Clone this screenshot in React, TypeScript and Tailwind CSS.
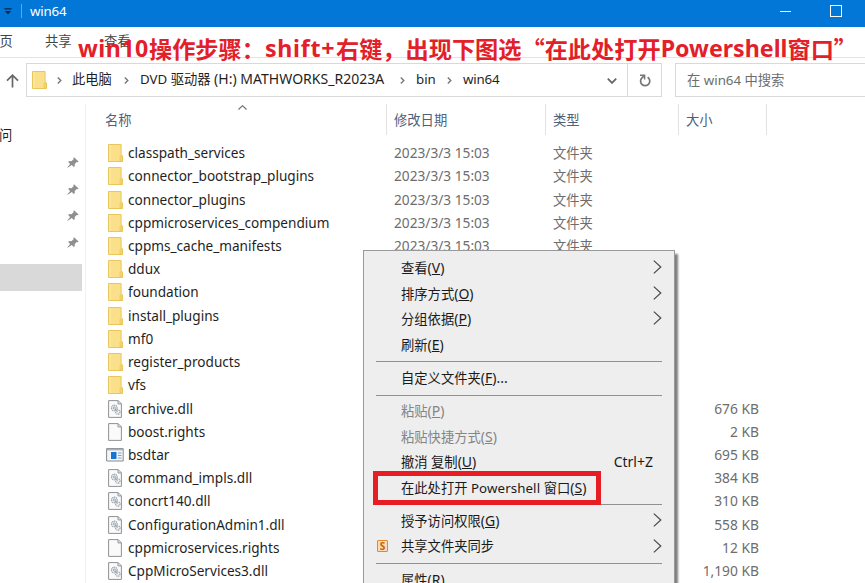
import type { ReactNode } from "react";

type FileKind = "folder" | "dll" | "doc" | "app";

type FileRow = { name: string; kind: FileKind; size?: string };

const files: FileRow[] = [
  { name: "classpath_services", kind: "folder" },
  { name: "connector_bootstrap_plugins", kind: "folder" },
  { name: "connector_plugins", kind: "folder" },
  { name: "cppmicroservices_compendium", kind: "folder" },
  { name: "cppms_cache_manifests", kind: "folder" },
  { name: "ddux", kind: "folder" },
  { name: "foundation", kind: "folder" },
  { name: "install_plugins", kind: "folder" },
  { name: "mf0", kind: "folder" },
  { name: "register_products", kind: "folder" },
  { name: "vfs", kind: "folder" },
  { name: "archive.dll", kind: "dll", size: "676 KB" },
  { name: "boost.rights", kind: "doc", size: "2 KB" },
  { name: "bsdtar", kind: "app", size: "695 KB" },
  { name: "command_impls.dll", kind: "dll", size: "384 KB" },
  { name: "concrt140.dll", kind: "dll", size: "310 KB" },
  { name: "ConfigurationAdmin1.dll", kind: "dll", size: "558 KB" },
  { name: "cppmicroservices.rights", kind: "doc", size: "12 KB" },
  { name: "CppMicroServices3.dll", kind: "dll", size: "1,190 KB" },
];

function FolderIcon() {
  return (
    <svg className="h-[18px] w-[15px]" viewBox="0 0 15 18" fill="none">
      <path d="M.5.5h12.6v10.2l1.4 1.2v5.6H.5z" fill="#fbe08b" stroke="#e9c75c" />
      <path d="M12 17.3v-4.8l1.3-1.4 1 1.2v5z" fill="#f4d470" stroke="#e6c458" strokeWidth=".6" />
      <path d="M2 1v16" stroke="#fdebaa" />
    </svg>
  );
}

function PageIcon({ gears }: { gears?: boolean }) {
  return (
    <svg className="h-[18px] w-[15px]" viewBox="0 0 15 18" fill="none">
      <path d="M.6.6h9.6l3.2 3.2v13.6H.6z" fill="#fafafa" stroke="#8f9296" />
      <path d="M10 .8v3.1h3.2" stroke="#8f9296" />
      {gears && (
        <g stroke="#98a3ac">
          <circle cx="6.3" cy="8" r="2.8" strokeWidth="1.2" strokeDasharray="1.3 .5" />
          <circle cx="6.3" cy="8" r="1.1" />
          <circle cx="9.8" cy="12" r="2.2" strokeWidth="1.2" strokeDasharray="1.2 .5" />
          <path d="M7 9l3 3.4" />
        </g>
      )}
    </svg>
  );
}

function AppIcon() {
  return (
    <svg className="h-[14px] w-[18px]" viewBox="0 0 18 14" fill="none">
      <path d="M.6.6h16.6v12.4H.6z" fill="#f3f5f7" stroke="#858a90" />
      <path d="M1 1.6h16" stroke="#a9b0b7" strokeWidth="1.5" />
      <path d="M5 4h5.5v7H5z" fill="#1874d2" />
      <path d="M12 5h3.5M12 7.5h3.5M12 10h3.5" stroke="#7d9fc4" />
    </svg>
  );
}

function FileIcon({ kind }: { kind: FileKind }) {
  if (kind === "folder") return <FolderIcon />;
  if (kind === "app") return <AppIcon />;
  return <PageIcon gears={kind === "dll"} />;
}

function PinIcon() {
  return (
    <svg className="h-[11px] w-[12px]" viewBox="0 0 12 11">
      <path d="M7 .3l4.6 4.2-1 .7-.9-.3-2 2 .1 2.1-1 .9-2-1.9L.7 10.7l-.4-.3 2.8-3.5L1.2 5l1-.9 2.2.1 2.2-2-.3-.9z" fill="#8f8f8f" />
    </svg>
  );
}

function Crumb() {
  return (
    <svg className="h-[7px] w-[5px] shrink-0" viewBox="0 0 5 7" fill="none">
      <path d="M.8.6l3 2.9-3 2.9" stroke="#777" strokeWidth="1.4" />
    </svg>
  );
}

function MenuItem({ children, hotkey, suffix, arrow, disabled, shortcut, icon }: {
  children: ReactNode;
  hotkey?: string;
  suffix?: string;
  arrow?: boolean;
  disabled?: boolean;
  shortcut?: string;
  icon?: ReactNode;
}) {
  return (
    <div className={`flex h-[25.5px] items-center pr-[12px] whitespace-pre ${disabled ? "text-[#858585]" : "text-[#1a1a1a]"}`}>
      <div className="flex w-[37px] shrink-0 pl-[13px]">{icon}</div>
      <span className="mb-[1.5px]">
        {children}
        {hotkey && <span className="text-[14px]">(<span className="underline underline-offset-1">{hotkey}</span>){suffix}</span>}
      </span>
      {shortcut && <span className="mr-[9px] mb-[1.5px] ml-auto text-[14px]">{shortcut}</span>}
      {arrow && (
        <svg className="mb-[3px] ml-auto h-[14px] w-[9px]" viewBox="0 0 9 14" fill="none">
          <path d="M.8.6L7.8 7l-7 6.4" stroke="#4a4a4a" strokeWidth="1.2" />
        </svg>
      )}
    </div>
  );
}

function Separator() {
  return (
    <div className="flex h-[7.8px] items-center pr-[12px] pl-[12px]">
      <div className="h-px w-full bg-[#919191]" />
    </div>
  );
}

function ContextMenu() {
  return (
    <div className="absolute top-[250px] left-[363px] h-[340px] w-[312px] border border-[#999] bg-[#eee] pt-[5px] shadow-[3px_4px_2px_rgba(0,0,0,0.5)]">
      <MenuItem hotkey="V" arrow>查看</MenuItem>
      <MenuItem hotkey="O" arrow>排序方式</MenuItem>
      <MenuItem hotkey="P" arrow>分组依据</MenuItem>
      <MenuItem hotkey="E">刷新</MenuItem>
      <Separator />
      <MenuItem hotkey="F" suffix="...">自定义文件夹</MenuItem>
      <Separator />
      <MenuItem hotkey="P" disabled>粘贴</MenuItem>
      <MenuItem hotkey="S" disabled>粘贴快捷方式</MenuItem>
      <MenuItem hotkey="U" shortcut="Ctrl+Z">撤消 复制</MenuItem>
      <MenuItem hotkey="S">在此处打开 <span className="tracking-[0.1px]">Powershell</span> 窗口</MenuItem>
      <Separator />
      <MenuItem hotkey="G" arrow>授予访问权限</MenuItem>
      <MenuItem
        arrow
        icon={<span className="mb-[3px] flex h-[12px] w-[11px] items-center justify-center rounded-[1px] border border-[#e08a2c] bg-[#fbdcb4] text-[10px] leading-none font-bold text-[#c4620a]">S</span>}
      >
        共享文件夹同步
      </MenuItem>
      <Separator />
      <MenuItem hotkey="R">属性</MenuItem>
      <div className="absolute top-[220px] left-[9px] h-[34px] w-[228px] border-5 border-[#e81c23]" />
    </div>
  );
}

export default function App() {
  return (
    <div className="relative flex h-[583px] w-[865px] flex-col overflow-hidden bg-white font-['Noto_Sans','Noto_Sans_CJK_SC',sans-serif] text-[13.3px] leading-[20px] text-[#1f1f1f]">
      {/* Title bar */}
      <div className="flex h-[27px] shrink-0 items-center bg-[#0277d7] pb-[5px] text-white">
        <svg className="ml-[4px] h-[7px] w-[8px]" viewBox="0 0 8 7">
          <path d="M.5.2h7v1.2h-7zM.8 3h6.4L4 6.3z" fill="#0b2848" />
        </svg>
        <div className="ml-[9px] h-[14px] w-px bg-[#5fa8e6]" />
        <span className="ml-[8px] tracking-[-0.2px]">win64</span>
        <div className="ml-auto h-px w-[11px] bg-white" />
        <div className="mr-[23px] ml-[39px] h-[12px] w-[12px] border border-white" />
      </div>

      {/* Ribbon tabs */}
      <div className="flex h-[31px] shrink-0 items-center border-b border-[#e3e3e3] pb-[2px] text-[#454545]">
        <span className="-ml-[0.5px] w-[45.5px]">页</span>
        <span className="w-[59px]">共享</span>
        <span>查看</span>
      </div>

      {/* Address bar */}
      <div className="flex h-[46px] shrink-0 items-start pt-[5px]">
        <svg className="mt-[11px] ml-[6px] h-[14px] w-[13px]" viewBox="0 0 13 14" fill="none">
          <path d="M6.5 13.5V1.4M1 6.6l5.5-5.4L12 6.6" stroke="#666" strokeWidth="1.7" />
        </svg>
        <div className="ml-[7px] flex h-[34px] w-[602px] items-center border border-[#d9d9d9] whitespace-pre">
          <div className="ml-[5px]"><FolderIcon /></div>
          <div className="ml-[10px]"><Crumb /></div>
          <span className="mb-[2px] ml-[10px] w-[52px]">此电脑</span>
          <Crumb />
          <span className="mb-[2px] ml-[11px] w-[260px]">DVD 驱动器 <span className="text-[14px] tracking-[0.02px]">(H:) MATHWORKS_R2023A</span></span>
          <Crumb />
          <span className="mb-[2px] ml-[11px] w-[31px]">bin</span>
          <Crumb />
          <span className="mb-[2px] ml-[11px] tracking-[-0.2px]">win64</span>
        </div>
        <div className="-ml-px flex h-[34px] w-[35px] items-center justify-center border border-[#d9d9d9]">
          <svg className="h-[13px] w-[12px]" viewBox="0 0 12 13" fill="none">
            <path d="M8.6 3.2A4.6 4.6 0 1 1 2.7 4.1L5 1.9" stroke="#777" strokeWidth="1.7" />
            <path d="M1 1.2h4.6v4.4" stroke="#777" strokeWidth="1.5" />
          </svg>
        </div>
        <div className="ml-[13px] flex h-[34px] flex-1 items-center border border-r-0 border-[#d9d9d9] pl-[11px] text-[#6d6d6d]">
          在 win64 中搜索
        </div>
        <svg className="absolute top-[78px] left-[607px] h-[6px] w-[10px]" viewBox="0 0 10 6" fill="none">
          <path d="M.8.7L5 4.9 9.2.7" stroke="#666" strokeWidth="1.8" />
        </svg>
      </div>

      <div className="flex flex-1">
        {/* Navigation pane */}
        <div className="flex w-[86px] shrink-0 flex-col border-r border-[#f1f1f1]">
          <span className="mt-[21px] -ml-[1px]">问</span>
          <div className="mt-[12px] mr-[6px] flex flex-col items-end gap-[15.7px]">
            <PinIcon />
            <PinIcon />
            <PinIcon />
            <PinIcon />
          </div>
          <div className="mt-[16px] h-[27px] w-[82px] bg-[#d9d9d9]" />
        </div>

        {/* File list */}
        <div className="flex flex-1 flex-col">
          <div className="relative flex h-[31px] shrink-0 items-center text-[#4f6079]">
            <span className="flex h-full w-[301px] items-center border-r border-[#e2e2e2] pl-[19px]">名称</span>
            <span className="flex h-full w-[159px] items-center border-r border-[#e2e2e2] pl-[7px]">修改日期</span>
            <span className="flex h-full w-[133px] items-center border-r border-[#e2e2e2] pl-[7px]">类型</span>
            <span className="flex h-full w-[88px] items-center border-r border-[#e2e2e2] pl-[7px]">大小</span>
            <svg className="absolute top-[1px] left-[152px] h-[5px] w-[9px]" viewBox="0 0 9 5" fill="none">
              <path d="M.5 4.5l4-3.8 4 3.8" stroke="#6b6b6b" strokeWidth="1.1" />
            </svg>
          </div>
          <div className="pt-[6.5px]">
            {files.map((file) => (
              <div key={file.name} className="flex h-[23.22px] items-center whitespace-pre text-[#6d6d6d]">
                <div className="flex w-[42px] shrink-0 justify-center pl-[16px]"><FileIcon kind={file.kind} /></div>
                <span className="w-[266px] text-[13.6px] text-[#1f1f1f]">{file.name}</span>
                <span className="w-[159px] text-[13.7px]">{file.kind === "folder" && "2023/3/3 15:03"}</span>
                <span className="w-[106px]">{file.kind === "folder" && "文件夹"}</span>
                <span className="w-[100px] text-right text-[13.8px]">{file.size}</span>
              </div>
            ))}
          </div>
        </div>
      </div>

      <ContextMenu />

      {/* Caption laid over the ribbon */}
      <div className="absolute top-[32px] left-[78px] flex text-[23.2px] leading-[32px] font-bold whitespace-pre text-[#e3202a]">
        <span className="w-[71px] tracking-[0.5px]">win10</span>
        <span className="w-[116px] font-['Noto_Sans_CJK_SC',sans-serif]">操作步骤：</span>
        <span className="w-[71px] tracking-[0.7px]">shift+</span>
        <span className="font-['Noto_Sans_CJK_SC',sans-serif]">右键，出现下图选“在此处打开</span>
        <span>Powershell</span>
        <span className="font-['Noto_Sans_CJK_SC',sans-serif]">窗口”</span>
      </div>
    </div>
  );
}
